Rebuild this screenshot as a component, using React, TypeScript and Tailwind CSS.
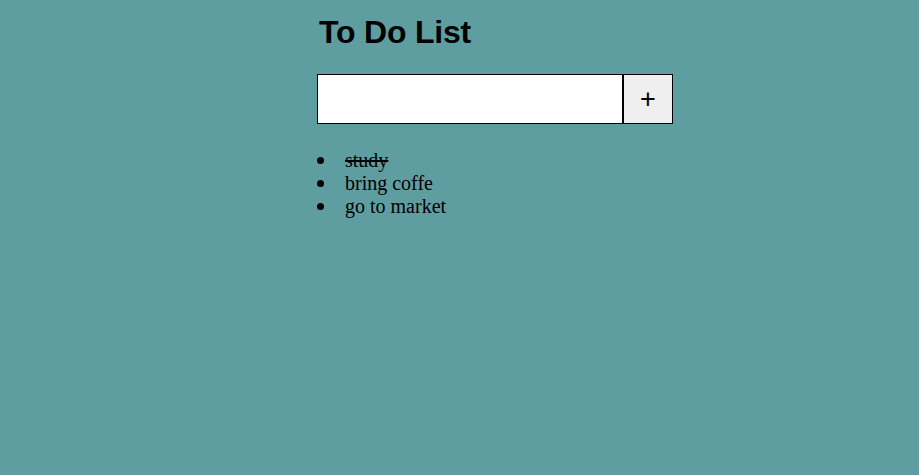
import React from "react";

const todos = [
  { text: "study", done: true },
  { text: "bring coffe", done: false },
  { text: "go to market", done: false },
];

export default function App() {
  return (
    <div className="min-h-[475px] w-full bg-[#5f9ea0] pt-[14px]">
      <div className="ml-[317px] w-[356px]">
        {/* Title */}
        <h1 className="pl-[2px] font-['Liberation_Sans',Arial,sans-serif] text-[32px] font-bold leading-[37px] tracking-[-0.2px] text-black">
          To Do List
        </h1>

        {/* Input row */}
        <div className="mt-[23px] flex h-[50px]">
          <input
            type="text"
            className="h-full w-[306px] border border-black bg-white px-2 outline-none"
          />
          <button className="h-full w-[50px] border border-black bg-[#efefef] font-['Liberation_Sans',Arial,sans-serif] text-[27px] leading-none text-black">
            +
          </button>
        </div>

        {/* List */}
        <ul className="mt-[25px] font-['Liberation_Serif','Times_New_Roman',serif] text-[20px] leading-[23px] text-black">
          {todos.map((item, index) => (
            <li key={index} className="flex items-center">
              <span className="w-[28px] shrink-0">
                <span className="block h-[7px] w-[7px] rounded-full bg-black" />
              </span>
              <span className={item.done ? "line-through" : ""}>{item.text}</span>
            </li>
          ))}
        </ul>
      </div>
    </div>
  );
}
